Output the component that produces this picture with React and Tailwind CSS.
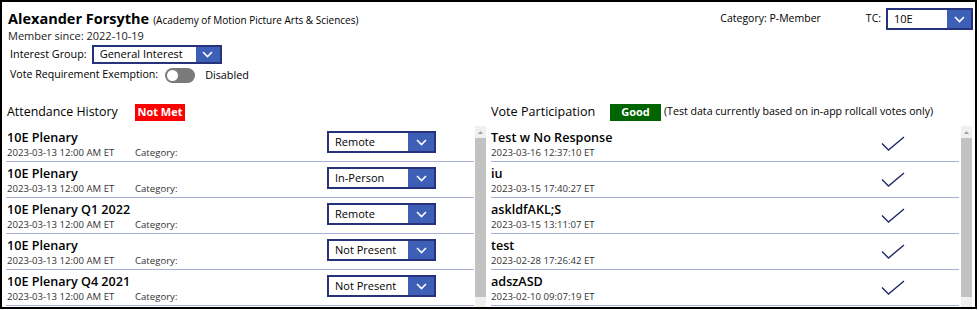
import React from 'react';

const attendance = [
  { title: '10E Plenary', status: 'Remote' },
  { title: '10E Plenary', status: 'In-Person' },
  { title: '10E Plenary Q1 2022', status: 'Remote' },
  { title: '10E Plenary', status: 'Not Present' },
  { title: '10E Plenary Q4 2021', status: 'Not Present' },
];

const votes = [
  { title: 'Test w No Response', date: '2023-03-16 12:37:10 ET' },
  { title: 'iu', date: '2023-03-15 17:40:27 ET' },
  { title: 'askldfAKL;S', date: '2023-03-15 13:11:07 ET' },
  { title: 'test', date: '2023-02-28 17:26:42 ET' },
  { title: 'adszASD', date: '2023-02-10 09:07:19 ET' },
];

function Chevron() {
  return (
    <svg width="11" height="7" viewBox="0 0 11 7">
      <polyline points="1,1 5.5,5.5 10,1" fill="none" stroke="white" strokeWidth="1.6" />
    </svg>
  );
}

function Dropdown({ value, className, chevronW = 'w-[24px]' }) {
  return (
    <div className={`flex border-2 border-[#26337a] bg-white ${className}`}>
      <div className="flex-1 flex items-center pl-[6px] text-[11px] text-black">{value}</div>
      <div className={`${chevronW} bg-[#3d5fb6] flex items-center justify-center`}>
        <Chevron />
      </div>
    </div>
  );
}

function Scrollbar() {
  return (
    <div className="w-[11px] h-full bg-[#f0f0f0] flex flex-col">
      <div className="h-[12px] flex items-center justify-center">
        <svg width="5" height="3" viewBox="0 0 5 3">
          <polygon points="0,3 2.5,0 5,3" fill="#a3a3a3" />
        </svg>
      </div>
      <div className="h-[159px] bg-[#c2c2c2]" />
    </div>
  );
}

export default function App() {
  return (
    <div className="w-[977px] h-[309px] border-2 border-black bg-white overflow-hidden font-['Open_Sans',sans-serif] text-black">
      {/* Header */}
      <div className="pl-[6px] pr-[2px] pt-[6px]">
        <div className="flex items-center h-[22px]">
          <span className="text-[14.5px] font-bold leading-none">Alexander Forsythe</span>
          <span className="text-[10px] ml-[4px] mt-[2px]">(Academy of Motion Picture Arts &amp; Sciences)</span>
          <span className="ml-auto text-[10.5px]">Category: P-Member</span>
          <span className="ml-[45px] text-[10.5px]">TC:</span>
          <Dropdown value="10E" className="ml-[5px] w-[87px] h-[22px]" />
        </div>
        <div className="h-[12px] leading-[12px] text-[11px] text-[#222]">Member since: 2022-10-19</div>
        <div className="flex items-center h-[20px] mt-[2px] pl-[2px]">
          <span className="text-[10.8px]">Interest Group:</span>
          <Dropdown value="General Interest" className="ml-[5px] w-[130px] h-[19px]" />
        </div>
        <div className="flex items-center h-[16px] mt-[3px] pl-[2px]">
          <span className="text-[10.6px]">Vote Requirement Exemption:</span>
          <div className="ml-[7px] w-[30px] h-[15px] rounded-full bg-[#7a7a7a] flex items-center px-[2px]">
            <div className="w-[11px] h-[11px] rounded-full bg-white" />
          </div>
          <span className="ml-[10px] text-[10.8px]">Disabled</span>
        </div>
      </div>

      {/* Section headers */}
      <div className="flex h-[18px] mt-[20px]">
        <div className="w-[487px] pl-[5px] flex items-center">
          <span className="text-[12.4px] w-[128px]">Attendance History</span>
          <span className="w-[50px] h-[17px] bg-[#ff0000] text-white text-[11px] font-bold flex items-center justify-center">Not Met</span>
        </div>
        <div className="pl-[2px] flex items-center">
          <span className="text-[12.6px] w-[119px]">Vote Participation</span>
          <span className="w-[51px] h-[17px] bg-[#006400] text-white text-[11px] font-bold flex items-center justify-center">Good</span>
          <span className="ml-[3px] text-[10.6px]">(Test data currently based on in-app rollcall votes only)</span>
        </div>
      </div>

      {/* Lists */}
      <div className="flex mt-[5px] h-[181px]">
        <div className="w-[487px] pl-[4px] flex">
          <div className="w-[468px]">
            {attendance.map((a, i) => (
              <div key={i} className="h-[36px] border-b border-[#a9b0d6] flex items-start">
                <div className="flex-1 pl-[1px]">
                  <div className="text-[12.6px] font-semibold leading-[16px] mt-[4px]">{a.title}</div>
                  <div className="flex text-[9.6px] text-[#333] leading-[14px]">
                    <span className="w-[128px]">2023-03-13 12:00 AM ET</span>
                    <span>Category:</span>
                  </div>
                </div>
                <Dropdown value={a.status} chevronW="w-[26px]" className="mt-[5px] mr-[38px] w-[109px] h-[22px]" />
              </div>
            ))}
          </div>
          <div className="ml-[1px]">
            <Scrollbar />
          </div>
        </div>
        <div className="pl-[2px] flex">
          <div className="w-[468px]">
            {votes.map((v, i) => (
              <div key={i} className="h-[36px] border-b border-[#a9b0d6] flex items-start">
                <div className="flex-1">
                  <div className="text-[12.6px] font-semibold leading-[16px] mt-[4px]">{v.title}</div>
                  <div className="text-[9.6px] text-[#333] leading-[14px]">{v.date}</div>
                </div>
                <svg width="24" height="15" viewBox="0 0 24 15" className="mt-[10px] mr-[54px]">
                  <polyline points="1,7.5 7.5,14 23,1" fill="none" stroke="#1f2a6b" strokeWidth="1.4" />
                </svg>
              </div>
            ))}
          </div>
          <div className="ml-[2px]">
            <Scrollbar />
          </div>
        </div>
      </div>
    </div>
  );
}
